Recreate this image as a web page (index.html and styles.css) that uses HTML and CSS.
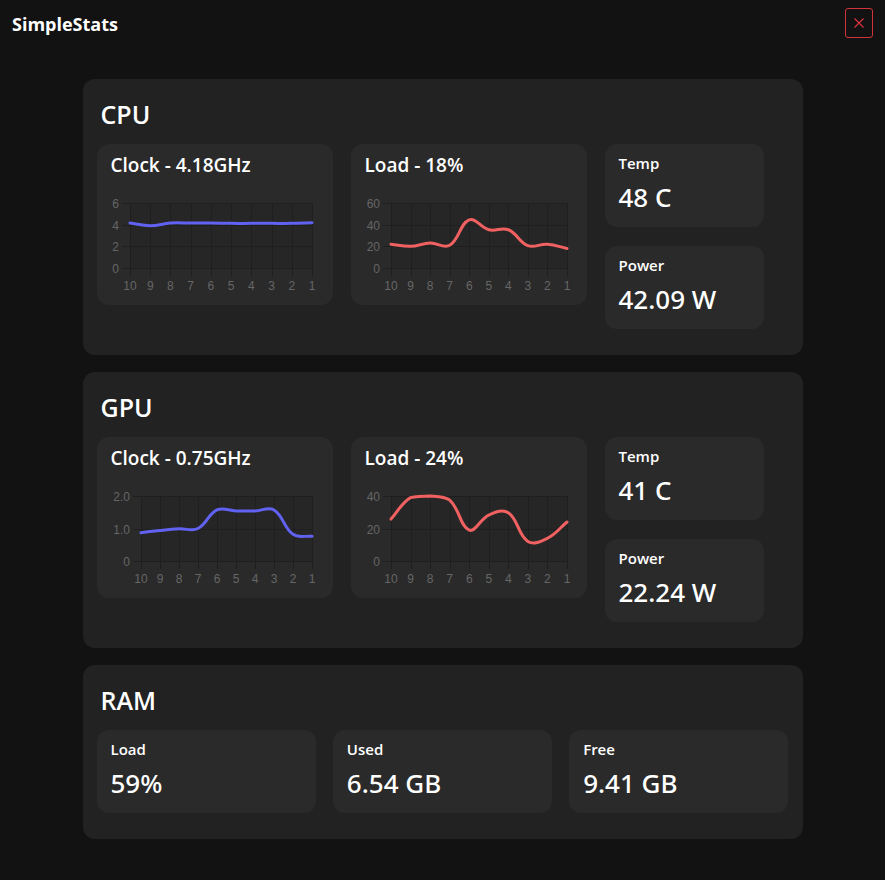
FILE: index.html
```html
<!DOCTYPE html>
<html lang="en">
<head>
<meta charset="utf-8">
<title>SimpleStats</title>
<link rel="stylesheet" href="styles.css">
</head>
<body>
<header class="topbar">
  <div class="app-title">SimpleStats</div>
  <button class="close-btn" aria-label="Close">
    <svg width="10" height="10" viewBox="0 0 10 10"><path d="M0.5 0.5 L9.5 9.5 M9.5 0.5 L0.5 9.5" stroke="currentColor" stroke-width="1.1" fill="none"/></svg>
  </button>
</header>
<main class="content">
  <section class="panel">
    <h2 class="panel-title">CPU</h2>
    <div class="panel-row">
      <div class="tile chart-tile">
        <div class="tile-title">Clock - 4.18GHz</div>
        <svg class="chart" width="236" height="128" data-values="4.15,3.9,4.15,4.15,4.15,4.12,4.12,4.12,4.12,4.18" data-max="6" data-steps="3" data-dec="0" data-left="33" data-right="215" data-color="#6161f2"></svg>
      </div>
      <div class="tile chart-tile">
        <div class="tile-title">Load - 18%</div>
        <svg class="chart" width="236" height="128" data-values="22,20,23,21,44.5,35.3,35.3,20.6,22,18" data-max="60" data-steps="3" data-dec="0" data-left="40" data-right="216" data-color="#f26161"></svg>
      </div>
      <div class="stat-col">
        <div class="tile stat-tile"><div class="stat-label">Temp</div><div class="stat-value">48 C</div></div>
        <div class="tile stat-tile"><div class="stat-label">Power</div><div class="stat-value">42.09 W</div></div>
      </div>
    </div>
  </section>

  <section class="panel">
    <h2 class="panel-title">GPU</h2>
    <div class="panel-row">
      <div class="tile chart-tile">
        <div class="tile-title">Clock - 0.75GHz</div>
        <svg class="chart" width="236" height="128" data-values="0.87,0.94,0.99,1.0,1.57,1.54,1.54,1.57,0.82,0.76" data-max="2" data-steps="2" data-dec="1" data-left="44" data-right="215" data-color="#6161f2"></svg>
      </div>
      <div class="tile chart-tile">
        <div class="tile-title">Load - 24%</div>
        <svg class="chart" width="236" height="128" data-values="25.8,39,40,37.5,19,28.3,29.7,12,14,24" data-max="40" data-steps="2" data-dec="0" data-left="40" data-right="216" data-color="#f26161"></svg>
      </div>
      <div class="stat-col">
        <div class="tile stat-tile"><div class="stat-label">Temp</div><div class="stat-value">41 C</div></div>
        <div class="tile stat-tile"><div class="stat-label">Power</div><div class="stat-value">22.24 W</div></div>
      </div>
    </div>
  </section>

  <section class="panel">
    <h2 class="panel-title">RAM</h2>
    <div class="ram-row">
      <div class="tile stat-tile"><div class="stat-label">Load</div><div class="stat-value">59%</div></div>
      <div class="tile stat-tile"><div class="stat-label">Used</div><div class="stat-value">6.54 GB</div></div>
      <div class="tile stat-tile"><div class="stat-label">Free</div><div class="stat-value">9.41 GB</div></div>
    </div>
  </section>
</main>
<script src="script.js"></script>
</body>
</html>
```

FILE: styles.css
```css
* { box-sizing: border-box; }

html, body {
  margin: 0;
  padding: 0;
  background: #121212;
  color: #ffffff;
  font-family: "Open Sans", "Noto Sans", sans-serif;
}

.topbar {
  height: 46px;
  padding: 0 12px;
  display: flex;
  align-items: center;
  justify-content: space-between;
}

.app-title {
  font-size: 18px;
  font-weight: 700;
  line-height: 24px;
  margin-top: 1px;
}

.close-btn {
  width: 28px;
  height: 30px;
  margin-top: 0;
  padding: 0;
  border: 1px solid #d13438;
  border-radius: 3px;
  background: transparent;
  color: #e0353f;
  display: flex;
  align-items: center;
  justify-content: center;
}

.close-btn svg { display: block; }

.content {
  padding-top: 33px;
  display: flex;
  flex-direction: column;
  align-items: center;
  gap: 17px;
}

.panel {
  width: 720px;
  background: #222222;
  border-radius: 12px;
  padding: 14px 14px 26px;
}

.panel-title {
  margin: 0 4px 9px;
  font-size: 25px;
  font-weight: 600;
  line-height: 42px;
}

.panel-row {
  display: flex;
  align-items: flex-start;
  gap: 18px;
}

.tile {
  background: #2a2a2a;
  border-radius: 12px;
}

.chart-tile {
  width: 236px;
  height: 161px;
  padding-top: 10px;
}

.tile-title {
  padding: 0 14px;
  font-size: 19px;
  font-weight: 600;
  line-height: 23px;
}

.chart {
  display: block;
  font-family: "Liberation Sans", Arial, sans-serif;
  font-size: 12px;
}

.stat-col {
  width: 159px;
  display: flex;
  flex-direction: column;
  gap: 19px;
}

.stat-tile {
  height: 83px;
  padding: 9px 14px 0;
}

.stat-label {
  font-size: 15px;
  font-weight: 600;
  line-height: 20px;
}

.stat-value {
  margin-top: 7px;
  font-family: "Noto Sans", "Open Sans", sans-serif;
  font-size: 26px;
  font-weight: 500;
  line-height: 34px;
}

.ram-row {
  display: grid;
  grid-template-columns: repeat(3, 1fr);
  gap: 17px;
}
```

FILE: script.js
```js
(function () {
  var T = 26, B = 91, TENSION = 0.4;
  function fmt(v, dec) {
    if (v === 0) return "0";
    return dec ? v.toFixed(dec) : String(Math.round(v));
  }
  document.querySelectorAll("svg.chart").forEach(function (svg) {
    var d = svg.dataset;
    var vals = d.values.split(",").map(Number);
    var max = +d.max, steps = +d.steps, dec = +d.dec;
    var L = +d.left, R = +d.right;
    var n = vals.length;
    var pts = vals.map(function (v, i) {
      return { x: L + (R - L) * i / (n - 1), y: B - (B - T) * v / max };
    });
    var html = '<rect x="' + L + '" y="' + T + '" width="' + (R - L) + '" height="' + (B - T) + '" fill="#262626"/>';
    var grid = "#1f1f1f";
    pts.forEach(function (p) {
      var x = Math.round(p.x) + 0.5;
      html += '<line x1="' + x + '" y1="' + T + '" x2="' + x + '" y2="' + (B + 8) + '" stroke="' + grid + '" stroke-width="1"/>';
    });
    for (var j = 0; j <= steps; j++) {
      var y = Math.round(B - (B - T) * j / steps) + 0.5;
      html += '<line x1="' + (L - 8) + '" y1="' + y + '" x2="' + R + '" y2="' + y + '" stroke="' + grid + '" stroke-width="1"/>';
      html += '<text x="' + (L - 11) + '" y="' + (y + 4) + '" text-anchor="end" fill="#666">' + fmt(max * j / steps, dec) + '</text>';
    }
    pts.forEach(function (p, i) {
      html += '<text x="' + p.x + '" y="112.5" text-anchor="middle" fill="#666">' + (n - i) + '</text>';
    });
    pts.forEach(function (cur, i) {
      var prev = pts[i - 1] || cur, next = pts[i + 1] || cur;
      var d01 = Math.hypot(cur.x - prev.x, cur.y - prev.y);
      var d12 = Math.hypot(next.x - cur.x, next.y - cur.y);
      var s01 = d01 / (d01 + d12), s12 = d12 / (d01 + d12);
      if (isNaN(s01)) s01 = 0;
      if (isNaN(s12)) s12 = 0;
      var fa = TENSION * s01, fb = TENSION * s12;
      cur.c1 = { x: cur.x - fa * (next.x - prev.x), y: cur.y - fa * (next.y - prev.y) };
      cur.c2 = { x: cur.x + fb * (next.x - prev.x), y: cur.y + fb * (next.y - prev.y) };
      [cur.c1, cur.c2].forEach(function (c) {
        c.y = Math.max(T, Math.min(B, c.y));
      });
    });
    var path = "M" + pts[0].x + " " + pts[0].y;
    for (var k = 1; k < n; k++) {
      var a = pts[k - 1], b = pts[k];
      path += " C" + a.c2.x + " " + a.c2.y + " " + b.c1.x + " " + b.c1.y + " " + b.x + " " + b.y;
    }
    html += '<path d="' + path + '" fill="none" stroke="' + d.color + '" stroke-width="3" stroke-linecap="round" stroke-linejoin="round"/>';
    svg.innerHTML = html;
  });
})();
```
